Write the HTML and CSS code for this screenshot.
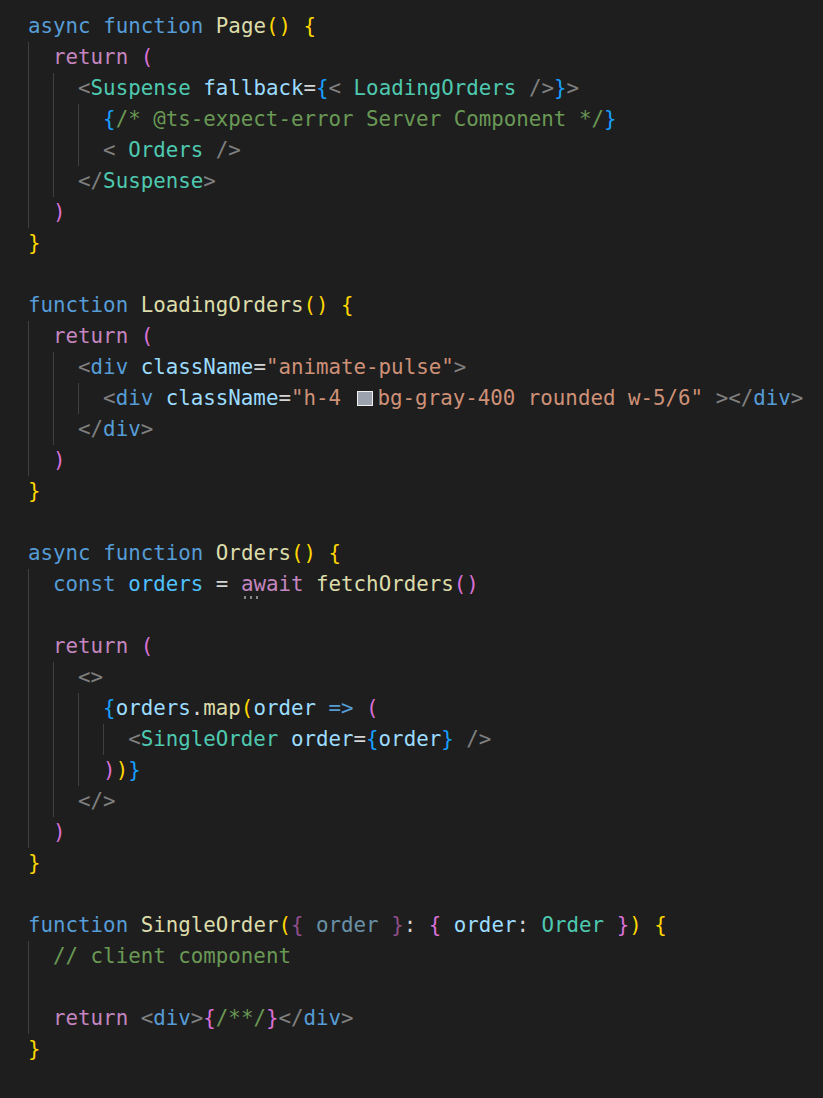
FILE: index.html
```html
<!DOCTYPE html>
<html lang="en">
<head>
<meta charset="utf-8">
<title>Orders</title>
<link rel="stylesheet" href="styles.css">
</head>
<body>
<main class="editor">
<div class="line"><span class="kw">async</span> <span class="kw">function</span> <span class="fn">Page</span><span class="b1">()</span> <span class="b1">{</span></div>
<div class="line"><span class="ind"></span><span class="ctl">return</span> <span class="b2">(</span></div>
<div class="line"><span class="ind"></span><span class="ind"></span><span class="pn">&lt;</span><span class="cmp">Suspense</span> <span class="attr">fallback</span><span class="op">=</span><span class="b3">{</span><span class="pn">&lt;</span> <span class="cmp">LoadingOrders</span> <span class="pn">/&gt;</span><span class="b3">}</span><span class="pn">&gt;</span></div>
<div class="line"><span class="ind"></span><span class="ind"></span><span class="ind"></span><span class="b3">{</span><span class="cm">/* @ts-expect-error Server Component */</span><span class="b3">}</span></div>
<div class="line"><span class="ind"></span><span class="ind"></span><span class="ind"></span><span class="pn">&lt;</span> <span class="cmp">Orders</span> <span class="pn">/&gt;</span></div>
<div class="line"><span class="ind"></span><span class="ind"></span><span class="pn">&lt;/</span><span class="cmp">Suspense</span><span class="pn">&gt;</span></div>
<div class="line"><span class="ind"></span><span class="b2">)</span></div>
<div class="line"><span class="b1">}</span></div>
<div class="line"></div>
<div class="line"><span class="kw">function</span> <span class="fn">LoadingOrders</span><span class="b1">()</span> <span class="b1">{</span></div>
<div class="line"><span class="ind"></span><span class="ctl">return</span> <span class="b2">(</span></div>
<div class="line"><span class="ind"></span><span class="ind"></span><span class="pn">&lt;</span><span class="kw">div</span> <span class="attr">className</span><span class="op">=</span><span class="str">"animate-pulse"</span><span class="pn">&gt;</span></div>
<div class="line"><span class="ind"></span><span class="ind"></span><span class="ind"></span><span class="pn">&lt;</span><span class="kw">div</span> <span class="attr">className</span><span class="op">=</span><span class="str">"h-4 </span><span class="swatch"></span><span class="str">bg-gray-400 rounded w-5/6"</span> <span class="pn">&gt;&lt;/</span><span class="kw">div</span><span class="pn">&gt;</span></div>
<div class="line"><span class="ind"></span><span class="ind"></span><span class="pn">&lt;/</span><span class="kw">div</span><span class="pn">&gt;</span></div>
<div class="line"><span class="ind"></span><span class="b2">)</span></div>
<div class="line"><span class="b1">}</span></div>
<div class="line"></div>
<div class="line"><span class="kw">async</span> <span class="kw">function</span> <span class="fn">Orders</span><span class="b1">()</span> <span class="b1">{</span></div>
<div class="line"><span class="ind"></span><span class="kw">const</span> <span class="const">orders</span> <span class="op">=</span> <span class="ctl"><span class="hint">aw</span>ait</span> <span class="fn">fetchOrders</span><span class="b2">()</span></div>
<div class="line"><span class="ind"></span></div>
<div class="line"><span class="ind"></span><span class="ctl">return</span> <span class="b2">(</span></div>
<div class="line"><span class="ind"></span><span class="ind"></span><span class="pn">&lt;&gt;</span></div>
<div class="line"><span class="ind"></span><span class="ind"></span><span class="ind"></span><span class="b3">{</span><span class="var">orders</span><span class="op">.</span><span class="fn">map</span><span class="b1">(</span><span class="var">order</span> <span class="kw">=&gt;</span> <span class="b2">(</span></div>
<div class="line"><span class="ind"></span><span class="ind"></span><span class="ind"></span><span class="ind"></span><span class="pn">&lt;</span><span class="cmp">SingleOrder</span> <span class="attr">order</span><span class="op">=</span><span class="b3">{</span><span class="var">order</span><span class="b3">}</span> <span class="pn">/&gt;</span></div>
<div class="line"><span class="ind"></span><span class="ind"></span><span class="ind"></span><span class="b2">)</span><span class="b1">)</span><span class="b3">}</span></div>
<div class="line"><span class="ind"></span><span class="ind"></span><span class="pn">&lt;/&gt;</span></div>
<div class="line"><span class="ind"></span><span class="b2">)</span></div>
<div class="line"><span class="b1">}</span></div>
<div class="line"></div>
<div class="line"><span class="kw">function</span> <span class="fn">SingleOrder</span><span class="b1">(</span><span class="faded"><span class="b2">{</span> <span class="var">order</span> <span class="b2">}</span></span><span class="op">:</span> <span class="b2">{</span> <span class="var">order</span><span class="op">:</span> <span class="cmp">Order</span> <span class="b2">}</span><span class="b1">)</span> <span class="b1">{</span></div>
<div class="line"><span class="ind"></span><span class="cm">// client component</span></div>
<div class="line"><span class="ind"></span></div>
<div class="line"><span class="ind"></span><span class="ctl">return</span> <span class="pn">&lt;</span><span class="kw">div</span><span class="pn">&gt;</span><span class="b2">{</span><span class="cm">/**/</span><span class="b2">}</span><span class="pn">&lt;/</span><span class="kw">div</span><span class="pn">&gt;</span></div>
<div class="line"><span class="b1">}</span></div>
</main>
</body>
</html>
```

FILE: styles.css
```css
html, body {
  margin: 0;
  padding: 0;
  background: #1e1e1e;
}

body {
  width: 823px;
  min-height: 1098px;
}

.editor {
  display: flex;
  flex-direction: column;
  padding: 10.5px 0 0 28px;
  font-family: "DejaVu Sans Mono", "Liberation Mono", monospace;
  font-size: 20.8px;
  color: #d4d4d4;
}

.line {
  height: 31px;
  line-height: 31px;
  white-space: pre;
}

.ind {
  display: inline-block;
  box-sizing: border-box;
  width: 25.04px;
  height: 31px;
  vertical-align: top;
  border-left: 1px solid #404040;
}

.kw { color: #569cd6; }
.ctl { color: #c586c0; }
.fn { color: #dcdcaa; }
.cmp { color: #4ec9b0; }
.attr { color: #9cdcfe; }
.var { color: #9cdcfe; }
.const { color: #4fc1ff; }
.str { color: #ce9178; }
.cm { color: #6a9955; }
.op { color: #d4d4d4; }
.pn { color: #808080; }
.b1 { color: #ffd700; }
.b2 { color: #da70d6; }
.b3 { color: #179fff; }

.faded { opacity: 0.6; }

.swatch {
  display: inline-block;
  box-sizing: border-box;
  width: 16px;
  height: 15px;
  margin: 0 5px 0 3px;
  border: 1.5px solid #f0f0f0;
  background: #9ca3af;
  vertical-align: -1px;
}

.hint {
  position: relative;
}

.hint::after {
  content: "";
  position: absolute;
  left: 1px;
  width: 18px;
  bottom: -3px;
  height: 3px;
  background: radial-gradient(circle, #8a8a8a 1.1px, transparent 1.4px) 0 0 / 6px 3px repeat-x;
}
```
